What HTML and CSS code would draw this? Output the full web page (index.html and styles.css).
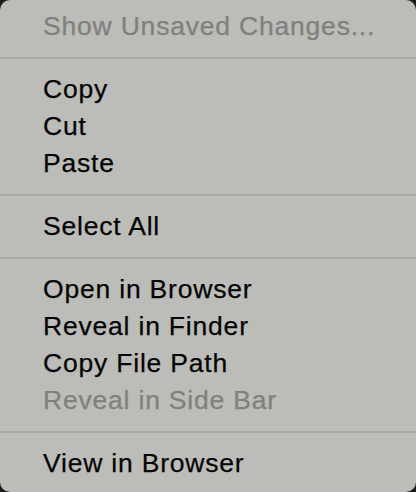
FILE: index.html
```html
<!DOCTYPE html>
<html>
<head>
<meta charset="utf-8">
<link rel="stylesheet" href="styles.css">
</head>
<body>
<div class="menu">
  <div class="item disabled">Show Unsaved Changes...</div>
  <div class="sep"></div>
  <div class="item">Copy</div>
  <div class="item">Cut</div>
  <div class="item">Paste</div>
  <div class="sep"></div>
  <div class="item">Select All</div>
  <div class="sep"></div>
  <div class="item">Open in Browser</div>
  <div class="item">Reveal in Finder</div>
  <div class="item">Copy File Path</div>
  <div class="item disabled">Reveal in Side Bar</div>
  <div class="sep"></div>
  <div class="item">View in Browser</div>
</div>
</body>
</html>
```
FILE: styles.css
```css
html, body {
  margin: 0;
  padding: 0;
  background: #1c1c1c;
  width: 416px;
  height: 492px;
  overflow: hidden;
}
.menu {
  width: 416px;
  height: 492px;
  box-sizing: border-box;
  background: #bcbcb8;
  border-radius: 10px;
  padding: 8px 0 10px;
  display: flex;
  flex-direction: column;
  font-family: "Liberation Sans", Arial, sans-serif;
}
.item {
  height: 37px;
  line-height: 37px;
  padding-left: 43px;
  font-size: 26.5px;
  letter-spacing: 0.8px;
  color: #050505;
  white-space: nowrap;
  -webkit-text-stroke: 0.25px currentColor;
}
.item.disabled {
  color: #80807e;
}
.sep {
  height: 26px;
  display: flex;
  align-items: center;
}
.sep::before {
  content: "";
  display: block;
  width: 100%;
  height: 2px;
  background: #a9a9a6;
}
```
